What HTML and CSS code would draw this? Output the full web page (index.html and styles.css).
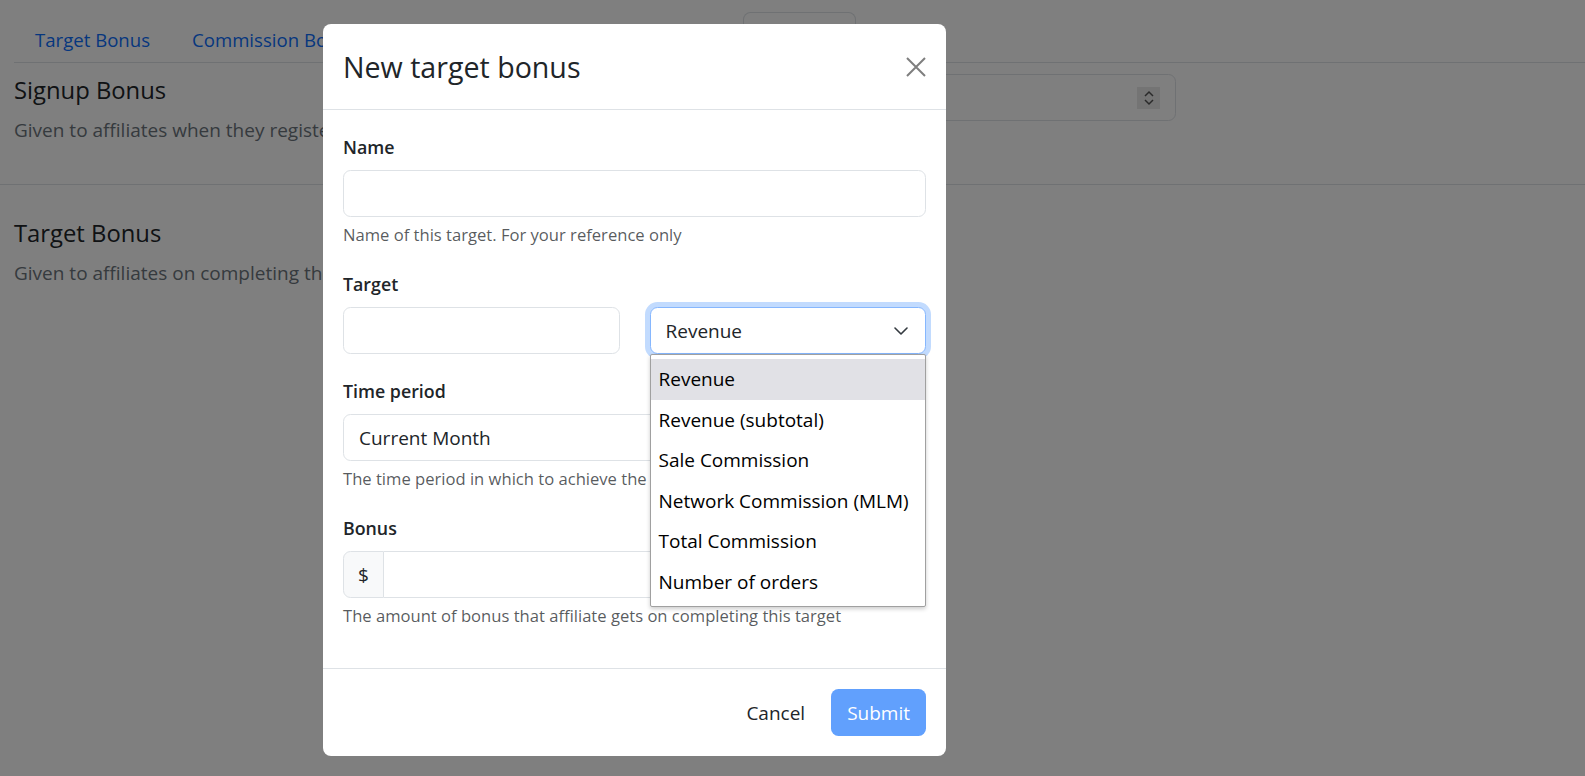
FILE: index.html
```html
<!DOCTYPE html>
<html lang="en">
<head>
<meta charset="utf-8">
<title>New target bonus</title>
<link rel="stylesheet" href="styles.css">
</head>
<body>
<div class="page">
  <nav class="tabs">
    <a class="tab">Target Bonus</a>
    <a class="tab">Commission Bonus</a>
    <a class="tab tab-active">Settings</a>
  </nav>
  <section class="setting setting-bordered">
    <div class="setting-inner">
      <div class="setting-text">
        <h5 class="setting-title">Signup Bonus</h5>
        <p class="setting-desc">Given to affiliates when they register</p>
      </div>
      <div class="num-input">
        <span class="spin">
          <svg width="12" height="16" viewBox="0 0 12 16"><path d="M2 6 6 2l4 4M2 10l4 4 4-4" fill="none" stroke="#555" stroke-width="1.5"/></svg>
        </span>
      </div>
    </div>
  </section>
  <section class="setting">
    <div class="setting-inner">
      <div class="setting-text">
        <h5 class="setting-title">Target Bonus</h5>
        <p class="setting-desc">Given to affiliates on completing the</p>
      </div>
    </div>
  </section>
</div>

<div class="backdrop"></div>

<div class="modal">
  <div class="modal-header">
    <h4 class="modal-title">New target bonus</h4>
    <button class="btn-close" aria-label="Close">
      <svg width="20" height="20" viewBox="0 0 20 20"><path d="M1 1l18 18M19 1 1 19" stroke="#000" stroke-width="2"/></svg>
    </button>
  </div>
  <div class="modal-body">
    <div class="group">
      <label class="label">Name</label>
      <div class="control"></div>
      <div class="help">Name of this target. For your reference only</div>
    </div>
    <div class="group">
      <label class="label">Target</label>
      <div class="row2">
        <div class="control"></div>
        <div class="select-wrap">
          <div class="control select-focus">
            <span>Revenue</span>
            <svg class="chev" width="14" height="8" viewBox="0 0 14 8"><path d="M1 1l6 6 6-6" fill="none" stroke="#343a40" stroke-width="1.6" stroke-linecap="round" stroke-linejoin="round"/></svg>
          </div>
          <div class="popup">
            <div class="opt opt-hl">Revenue</div>
            <div class="opt">Revenue (subtotal)</div>
            <div class="opt">Sale Commission</div>
            <div class="opt">Network Commission (MLM)</div>
            <div class="opt">Total Commission</div>
            <div class="opt">Number of orders</div>
          </div>
        </div>
      </div>
    </div>
    <div class="group">
      <label class="label">Time period</label>
      <div class="control"><span>Current Month</span></div>
      <div class="help">The time period in which to achieve the</div>
    </div>
    <div class="group">
      <label class="label">Bonus</label>
      <div class="input-group">
        <span class="addon">$</span>
        <div class="control control-grow"></div>
      </div>
      <div class="help">The amount of bonus that affiliate gets on completing this target</div>
    </div>
  </div>
  <div class="modal-footer">
    <button class="btn btn-cancel">Cancel</button>
    <button class="btn btn-submit">Submit</button>
  </div>
</div>
</body>
</html>
```

FILE: styles.css
```css
* { box-sizing: border-box; }
html, body { margin: 0; padding: 0; }
body {
  font-family: "Open Sans", "Noto Sans", sans-serif;
  font-size: 19px;
  line-height: 30px;
  color: #212529;
  background: #fff;
  width: 1585px;
  height: 776px;
  overflow: hidden;
  position: relative;
}

/* page behind */
.tabs {
  display: flex;
  margin-left: 14px;
  padding-top: 12px;
  border-bottom: 1px solid #dee2e6;
}
.tab {
  color: #0d6efd;
  font-size: 18.6px;
  padding: 12px 20px 7px;
  border: 1px solid transparent;
  border-bottom: none;
  line-height: 30px;
  white-space: nowrap;
}
.tab-active {
  margin-left: 363px;
  width: 113px;
  border-color: #dee2e6;
  border-radius: 7.5px 7.5px 0 0;
  color: #495057;
}
.setting { padding: 12px 0 39px 14px; }
.setting + .setting { padding-top: 33px; }
.setting-bordered { border-bottom: 1px solid #dee2e6; }
.setting-inner {
  display: flex;
  justify-content: space-between;
  align-items: flex-start;
  max-width: 1162px;
}
.setting-title {
  margin: 0 0 10px;
  font-size: 23.8px;
  font-weight: 400;
  line-height: 30px;
}
.setting-desc { margin: 0; color: #6c757d; white-space: nowrap; }
.num-input {
  margin-top: -1px;
  width: 420px;
  height: 47px;
  border: 1px solid #dee2e6;
  border-radius: 7.5px;
  display: flex;
  justify-content: flex-end;
  align-items: center;
  padding-right: 15px;
}
.spin {
  width: 23px;
  height: 22px;
  background: #e9e9e9;
  display: flex;
  align-items: center;
  justify-content: center;
}

.backdrop {
  position: fixed;
  inset: 0;
  background: rgba(0, 0, 0, 0.5);
}

/* modal */
.modal {
  position: absolute;
  left: 323px;
  top: 24px;
  width: 623px;
  background: #fff;
  border-radius: 8px;
}
.modal-header {
  display: flex;
  align-items: center;
  justify-content: space-between;
  padding: 20px;
  border-bottom: 1px solid #dee2e6;
}
.modal-title {
  margin: 0;
  font-size: 28.6px;
  font-weight: 400;
  line-height: 45px;
}
.btn-close {
  border: 0;
  background: none;
  padding: 0;
  width: 20px;
  height: 20px;
  opacity: 0.5;
  display: flex;
}
.modal-body { padding: 20px 20px 40px; }
.group { margin-bottom: 20px; }
.group:last-child { margin-bottom: 0; }
.label {
  display: block;
  font-weight: 600;
  font-size: 17.8px;
  line-height: 30px;
  padding-top: 2px;
  margin-bottom: 8px;
}
.control {
  height: 47px;
  border: 1px solid #dee2e6;
  border-radius: 7.5px;
  background: #fff;
  padding: 0 15px;
  display: flex;
  align-items: center;
}
.help {
  margin-top: 5px;
  font-size: 16.6px;
  line-height: 25px;
  color: rgba(33, 37, 41, 0.75);
  white-space: nowrap;
}
.row2 {
  display: grid;
  grid-template-columns: 1fr 1fr;
  gap: 30px;
}
.select-wrap { position: relative; }
.select-focus {
  border-color: #86b7fe;
  box-shadow: 0 0 0 5px rgba(13, 110, 253, 0.25);
  justify-content: space-between;
}
.chev { margin-right: 2px; }
.popup {
  position: absolute;
  left: 0;
  right: 0;
  top: 100%;
  background: #fff;
  border: 1px solid #a0a0a0;
  border-radius: 2px;
  box-shadow: 0 2px 4px rgba(0, 0, 0, 0.2);
  padding: 4px 0;
  z-index: 2;
}
.opt {
  height: 40.5px;
  line-height: 40.5px;
  padding-left: 8px;
  color: #000;
  white-space: nowrap;
}
.opt-hl { background: #e1e1e6; }
.input-group { display: flex; }
.addon {
  width: 41px;
  height: 47px;
  display: flex;
  align-items: center;
  justify-content: center;
  background: #f8f9fa;
  border: 1px solid #dee2e6;
  border-radius: 7.5px 0 0 7.5px;
}
.control-grow {
  flex: 1;
  border-left: none;
  border-radius: 0 7.5px 7.5px 0;
}
.modal-footer {
  display: flex;
  justify-content: flex-end;
  gap: 10px;
  padding: 20px;
  border-top: 1px solid #dee2e6;
}
.btn {
  font-family: inherit;
  font-size: 19px;
  height: 47px;
  padding: 0 15px;
  border: 1px solid transparent;
  border-radius: 7.5px;
  background: none;
  color: #212529;
}
.btn-submit {
  background: #0d6efd;
  color: #fff;
  opacity: 0.65;
}
```
